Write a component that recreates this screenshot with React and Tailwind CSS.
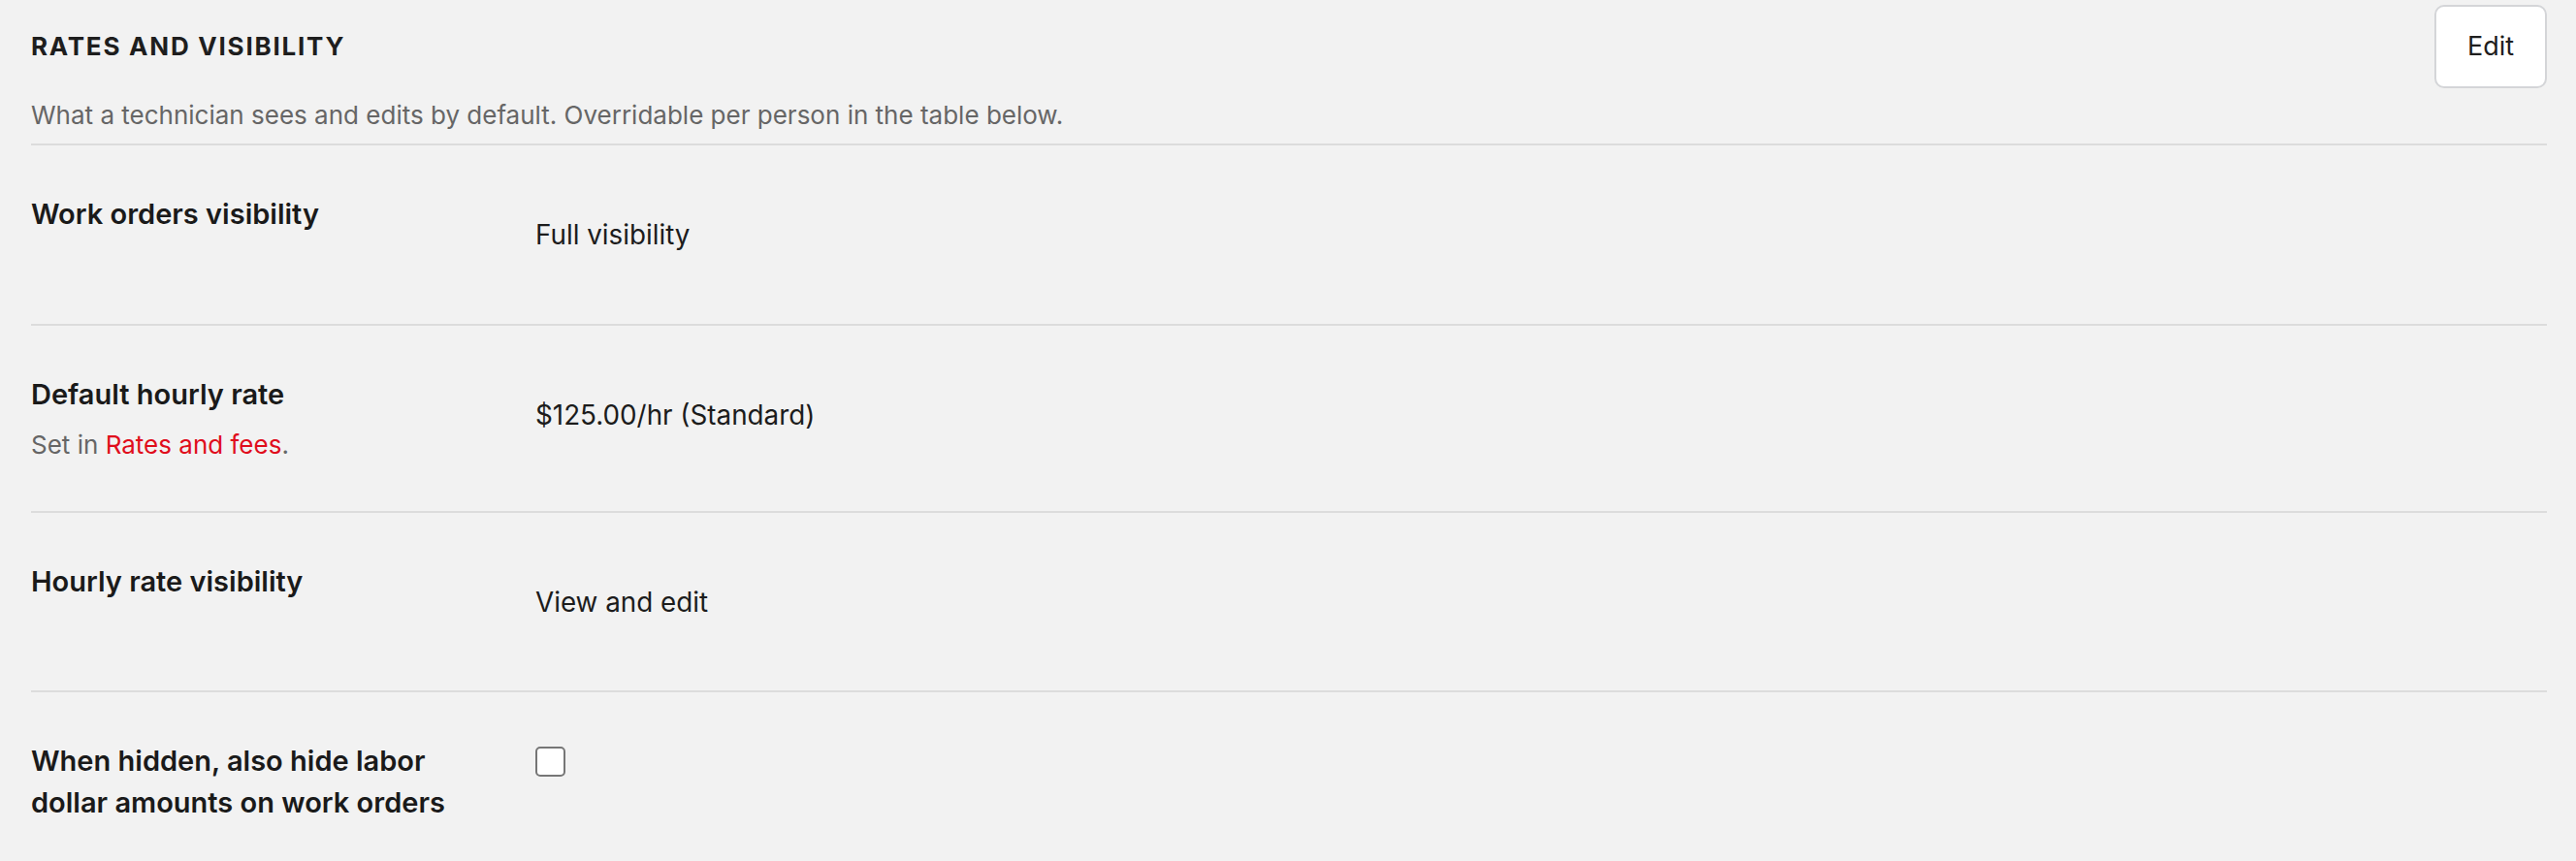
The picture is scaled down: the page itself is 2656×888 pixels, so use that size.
import React from 'react';

const ROWS = [
  { label: 'Work orders visibility', value: 'Full visibility', h: 'h-[186px]' },
  { label: 'Default hourly rate', value: '$125.00/hr (Standard)', h: 'h-[193px]', hint: true },
  { label: 'Hourly rate visibility', value: 'View and edit', h: 'h-[185px]' },
];

export default function App() {
  return (
    <div className="min-h-screen bg-[#f2f2f2] pl-[32px] pr-[30px] text-[#1c1c1c] font-['Inter','Liberation_Sans',sans-serif]">
      <div className="flex items-start justify-between pb-[11px]">
        <div className="pt-[30px]">
          <h2 className="text-[26px] leading-[36px] font-bold uppercase tracking-[0.068em] text-[#1e1e1e]">
            Rates and visibility
          </h2>
          <p className="mt-[35px] text-[26px] leading-[36px] text-[#666666]">
            What a technician sees and edits by default. Overridable per person in the table below.
          </p>
        </div>
        <button className="mt-[5px] w-[116px] h-[86px] bg-white border-2 border-[#d4d5d8] rounded-[10px] text-[27px] text-[#1e1e1e]">
          Edit
        </button>
      </div>

      {ROWS.map((row) => (
        <div key={row.label} className={`grid grid-cols-[520px_1fr] border-t-2 border-[#dcdcdc] ${row.h}`}>
          <div className="pt-[49px] pr-[50px]">
            <div className="text-[29px] leading-[43px] font-semibold text-[#1a1a1a]">{row.label}</div>
            {row.hint && (
              <div className="mt-[13px] text-[26px] leading-[36px] text-[#666666]">
                Set in <a className="text-[#e00d1c]">Rates and fees</a>.
              </div>
            )}
          </div>
          <div className="pt-[72px] text-[27.8px] leading-[40px] text-[#1c1c1c]">{row.value}</div>
        </div>
      ))}

      <div className="grid grid-cols-[520px_1fr] border-t-2 border-[#dcdcdc] pb-[40px]">
        <div className="pt-[49px] pr-[50px]">
          <div className="text-[29px] leading-[43px] font-semibold text-[#1a1a1a]">
            When hidden, also hide labor dollar amounts on work orders
          </div>
        </div>
        <div className="pt-[56px]">
          <input
            type="checkbox"
            className="appearance-none block w-[31px] h-[31px] bg-white border-2 border-[#767676] rounded-[5px]"
          />
        </div>
      </div>
    </div>
  );
}
